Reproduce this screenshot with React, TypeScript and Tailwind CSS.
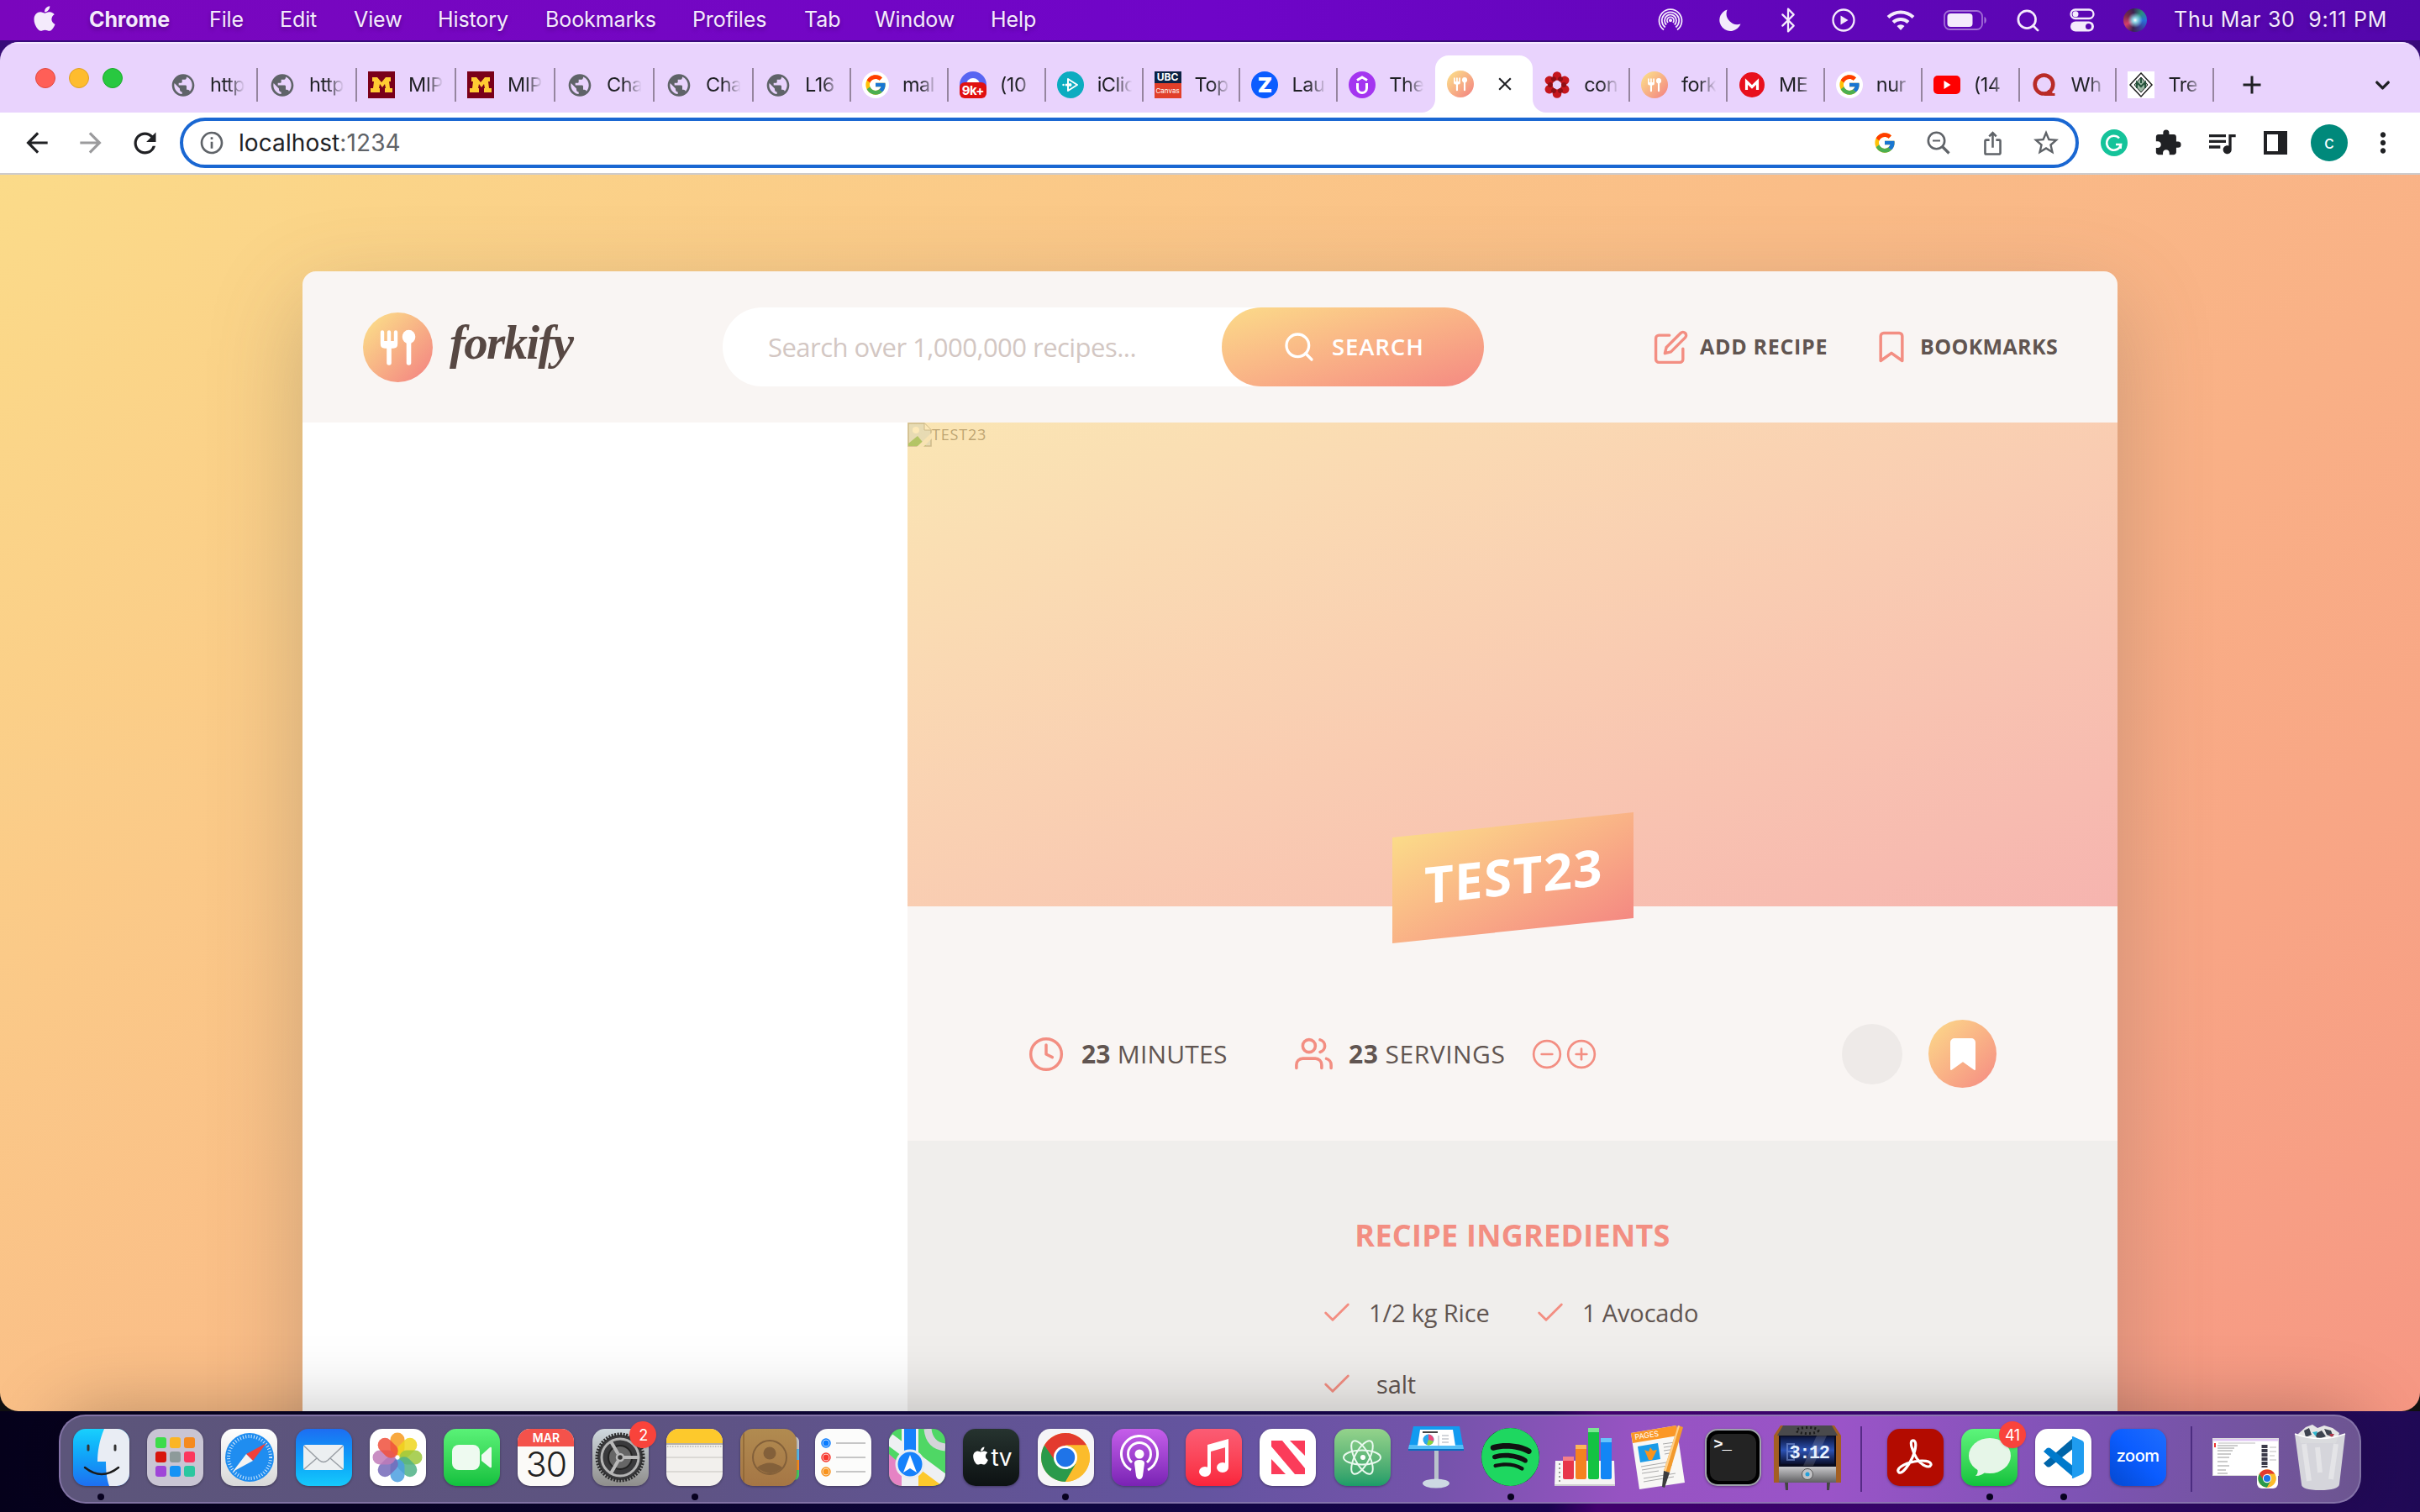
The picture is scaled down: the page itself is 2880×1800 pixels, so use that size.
import React from "react";
import { FaApple, FaSpotify } from "react-icons/fa";
import { FcGoogle } from "react-icons/fc";
import { FiEdit, FiBookmark, FiSearch, FiClock, FiUsers, FiMinusCircle, FiPlusCircle, FiCheck } from "react-icons/fi";
import {
  MdPublic, MdArrowBack, MdArrowForward, MdRefresh, MdInfoOutline, MdIosShare,
  MdStarBorder, MdExtension, MdQueueMusic, MdMoreVert, MdAdd, MdClose,
} from "react-icons/md";
import { Bluetooth, ChevronDown, Search } from "lucide-react";

/* ---------- Menu bar ---------- */

const menus = [
  { label: "Chrome", cls: "w-[143px] font-bold" },
  { label: "File", cls: "w-[84px]" },
  { label: "Edit", cls: "w-[88px]" },
  { label: "View", cls: "w-[100px]" },
  { label: "History", cls: "w-[128px]" },
  { label: "Bookmarks", cls: "w-[175px]" },
  { label: "Profiles", cls: "w-[133px]" },
  { label: "Tab", cls: "w-[84px]" },
  { label: "Window", cls: "w-[138px]" },
  { label: "Help", cls: "w-[80px]" },
];

function Slot({ w, children }: { w: string; children: React.ReactNode }) {
  return <span className={`flex shrink-0 items-center justify-center ${w}`}>{children}</span>;
}

function MenuBar() {
  return (
    <header className="flex h-[48px] shrink-0 items-center bg-linear-to-r from-[#7a06bd] via-[#6f05c8] to-[#5306ab] text-[25px] tracking-[-0.1px] text-[#f4ebfc] [text-shadow:0_3px_5px_rgba(0,0,0,0.25)]">
      <div className="flex w-[106px] justify-center"><FaApple size={34} className="-mt-1" /></div>
      {menus.map((m) => (
        <span key={m.label} className={`shrink-0 whitespace-nowrap ${m.cls}`}>{m.label}</span>
      ))}
      <div className="ml-auto flex items-center">
        <Slot w="w-[72px]">
          <svg width="30" height="30" viewBox="0 0 30 30" fill="none" stroke="currentColor" strokeWidth="1.800">
            <path d="M7 26.500a13.500 13.500 0 1 1 16 0" /><path d="M8.700 23.500a10.200 10.200 0 1 1 12.600 0" /><path d="M10.200 20.500a7 7 0 1 1 9.600 0" /><path d="M12 18a4 4 0 1 1 6 0" />
            <circle cx="15" cy="15.200" r="2" fill="currentColor" stroke="none" />
          </svg>
        </Slot>
        <Slot w="w-[70px]">
          <svg width="28" height="28" viewBox="0 0 28 28" fill="currentColor"><path d="M10.500 1.500A13 13 0 1 0 26.500 18.500 13 13 0 0 1 10.500 1.500z" /></svg>
        </Slot>
        <Slot w="w-[67px]"><Bluetooth size={32} strokeWidth={1.700} /></Slot>
        <Slot w="w-[65px]">
          <svg width="28" height="28" viewBox="0 0 28 28" fill="none" stroke="currentColor" strokeWidth="2.300"><circle cx="14" cy="14" r="12.500" /><path d="M10.500 8.500v11l9-5.500z" fill="currentColor" stroke="none" /></svg>
        </Slot>
        <Slot w="w-[72px]">
          <svg width="34" height="26" viewBox="0 0 34 26" fill="none" stroke="currentColor" strokeWidth="4"><path d="M2 9.500a21.500 21.500 0 0 1 30 0" /><path d="M8 15.500a13 13 0 0 1 18 0" /><path d="M12.500 20a6.500 6.500 0 0 1 9 0L17 25z" fill="currentColor" stroke="none" /></svg>
        </Slot>
        <Slot w="w-[82px]">
          <svg width="52" height="26" viewBox="0 0 52 26" fill="none"><rect x="1" y="2" width="45" height="22" rx="6.500" stroke="currentColor" strokeOpacity=".45" strokeWidth="1.800" /><rect x="4.500" y="5" width="30" height="16" rx="4" fill="currentColor" /><path d="M48.500 9v8c3-1 3-7 0-8z" fill="currentColor" fillOpacity=".5" /></svg>
        </Slot>
        <Slot w="w-[66px]"><Search size={31} strokeWidth={2.100} /></Slot>
        <Slot w="w-[64px]">
          <svg width="30" height="28" viewBox="0 0 30 28" fill="none" stroke="currentColor" strokeWidth="2.300"><rect x="1.500" y="1.500" width="27" height="10.500" rx="5.250" /><circle cx="7" cy="6.750" r="3.500" fill="currentColor" stroke="none" /><rect x="1" y="15.500" width="28" height="12" rx="6" fill="currentColor" stroke="none" /><circle cx="22.500" cy="21.500" r="3.500" fill="#5a06b0" stroke="none" /></svg>
        </Slot>
        <Slot w="w-[61px]">
          <span className="h-7 w-7 rounded-full bg-[radial-gradient(circle_at_50%_50%,#ffffff_0%,#8fd8e8_14%,transparent_45%),conic-gradient(from_40deg,#2a8f7c,#2a6fd8,#3a3f9a,#3c2350,#d33f6b,#7a2a4a,#3c2350,#2a8f7c)]" />
        </Slot>
        <span className="w-[309px] whitespace-pre pl-[16px] tracking-[0.760px]">Thu Mar 30  9:11 PM</span>
      </div>
    </header>
  );
}

/* ---------- Browser chrome ---------- */

function Logo({ size }: { size: number }) {
  return (
    <svg width={size} height={size} viewBox="0 0 83 83">
      <defs>
        <linearGradient id="lg" x1="0" y1="0" x2="1" y2="1"><stop offset=".1" stopColor="#fbdb89" /><stop offset=".9" stopColor="#f48982" /></linearGradient>
      </defs>
      <circle cx="41.500" cy="41.500" r="41.500" fill="url(#lg)" />
      <g fill="none" stroke="#fff" strokeLinecap="round">
        <path d="M23 23.500v14q0 3 3 3h10q3 0 3-3v-14M31 23.500v16" strokeWidth="4.400" />
        <path d="M31 40v20M54.500 36v24" strokeWidth="5.600" />
      </g>
      <path d="M23 34h16v3q0 4-4 4h-8q-4 0-4-4z" fill="#fff" />
      <ellipse cx="54.500" cy="29" rx="7.800" ry="8.200" fill="#fff" />
    </svg>
  );
}

const Globe = () => <MdPublic size={33} color="#5f6368" />;
const Minnesota = () => (
  <span className="flex h-8 w-8 items-center justify-center bg-[#7a0019]">
    <svg width="28" height="18" viewBox="0 0 28 18" fill="#ffcc33"><path d="M3 0h6l5 6 5-6h6v5h-2l1 8h3v5h-9v-5h1l-1-5-3 4-3-4-1 5h1v5H1v-5h3l1-8H3z" /></svg>
  </span>
);
const GoogleIcon = () => (
  <span className="flex h-8 w-8 items-center justify-center rounded-full bg-white"><FcGoogle size={28} /></span>
);
const Discord = () => (
  <span className="relative flex h-8 w-8 justify-center rounded-full bg-[#5865f2]">
    <span className="mt-2 h-4 w-4 rounded-full bg-white" />
    <span className="absolute bottom-0 flex h-[19px] w-8 items-center justify-center rounded-md bg-[#e01010] text-[15px] leading-none font-bold tracking-[-0.500px] text-white">9k+</span>
  </span>
);
const IClicker = () => (
  <svg width="32" height="32" viewBox="0 0 32 32"><circle cx="16" cy="16" r="16" fill="#0cacc0" /><path d="M13 9l11 7-11 7z" fill="none" stroke="#fff" strokeWidth="2" strokeLinejoin="round" /><circle cx="7.500" cy="16" r="1.200" fill="#fff" /><circle cx="11" cy="16" r="1.500" fill="#fff" /><circle cx="15.500" cy="16" r="2" fill="#fff" /></svg>
);
const Ubc = () => (
  <span className="flex h-8 w-8 flex-col text-center leading-none text-white">
    <span className="h-[14px] bg-[#0c2344] pt-px text-[12px] font-bold">UBC</span>
    <span className="h-[18px] bg-[#e13f29] pt-[5px] text-[8px]">Canvas</span>
  </span>
);
const ZBadge = () => <span className="flex h-8 w-8 items-center justify-center rounded-full bg-[#0b5cff] text-[25px] leading-none font-black text-white">Z</span>;
const Udemy = () => (
  <svg width="32" height="32" viewBox="0 0 32 32"><circle cx="16" cy="16" r="16" fill="#a435f0" /><path d="M10.500 14v6a5.500 5.500 0 0 0 11 0v-6M10 10.500l6-3.500 6 3.500" fill="none" stroke="#fff" strokeWidth="3" /></svg>
);
const RedFlower = () => (
  <svg width="32" height="32" viewBox="0 0 32 32" fill="#c5161d">
    {[0, 60, 120, 180, 240, 300].map((a) => <circle key={a} cx="16" cy="5.500" r="5.300" transform={`rotate(${a} 16 16)`} />)}
    {[30, 90, 150, 210, 270, 330].map((a) => <circle key={a} cx="16" cy="8" r="3" fill="#8f1015" transform={`rotate(${a} 16 16)`} />)}
    <circle cx="16" cy="16" r="4" fill="#e9d3fd" />
  </svg>
);
const Mega = () => (
  <svg width="32" height="32" viewBox="0 0 32 32"><circle cx="16" cy="16" r="15" fill="#e8101c" /><path d="M9.500 22V12l6.500 6.500 6.500-6.500v10" fill="none" stroke="#fff" strokeWidth="3.200" /></svg>
);
const YouTube = () => (
  <svg width="32" height="24" viewBox="0 0 32 24"><rect y="1" width="32" height="22" rx="5" fill="#f00" /><path d="M12.500 7v10l8-5z" fill="#fff" /></svg>
);
const Quora = () => (
  <svg width="28" height="28" viewBox="0 0 28 28" fill="none" stroke="#b92b27"><ellipse cx="13.500" cy="13.500" rx="10.800" ry="11" strokeWidth="4.600" /><path d="M14 25.500h12.500M18 21l5 4" strokeWidth="3" /></svg>
);
const Tree = () => (
  <svg width="32" height="32" viewBox="0 0 32 32"><rect width="32" height="32" fill="#fff" /><path d="M16 2L29 16 16 30 3 16z" fill="none" stroke="#222" strokeWidth="1.500" /><path d="M16 7l8 9-8 9-8-9z" fill="#9db8a5" stroke="#222" /><path d="M11 20v-7l5 5 5-5v7M16 8v6" fill="none" stroke="#24523a" strokeWidth="2" /></svg>
);

const tabs: { icon: React.ReactNode; text: string; active?: boolean; wide?: boolean; noLine?: boolean }[] = [
  { icon: <Globe />, text: "http", wide: true },
  { icon: <Globe />, text: "http", wide: true },
  { icon: <Minnesota />, text: "MIP", wide: true },
  { icon: <Minnesota />, text: "MIP", wide: true },
  { icon: <Globe />, text: "Cha", wide: true },
  { icon: <Globe />, text: "Cha", wide: true },
  { icon: <Globe />, text: "L16" },
  { icon: <GoogleIcon />, text: "mal" },
  { icon: <Discord />, text: "(10" },
  { icon: <IClicker />, text: "iClic" },
  { icon: <Ubc />, text: "Top" },
  { icon: <ZBadge />, text: "Lau" },
  { icon: <Udemy />, text: "The", noLine: true },
  { icon: <Logo size={32} />, text: "", active: true },
  { icon: <RedFlower />, text: "con" },
  { icon: <Logo size={32} />, text: "fork" },
  { icon: <Mega />, text: "ME" },
  { icon: <GoogleIcon />, text: "nur" },
  { icon: <YouTube />, text: "(14" },
  { icon: <Quora />, text: "Wh" },
  { icon: <Tree />, text: "Tre" },
];

function TabStrip() {
  return (
    <div className="flex h-[84px] shrink-0 border-t-2 border-[#f4eaff] bg-[#e9d3fd] text-[#1f2024]">
      <div className="flex w-[189px] shrink-0 items-center gap-[16px] pl-[42px]">
        <i className="h-6 w-6 rounded-full border border-[#e0483f] bg-[#ff5f57]" />
        <i className="h-6 w-6 rounded-full border border-[#dfa123] bg-[#febc2e]" />
        <i className="h-6 w-6 rounded-full border border-[#1aab29] bg-[#28c840]" />
      </div>
      {tabs.map((t, i) =>
        t.active ? (
          <div key={i} className="relative mt-[14px] flex w-[115.900px] shrink-0 items-center rounded-t-[16px] bg-white pl-[14px]">
            <svg className="absolute bottom-0 -left-4" width="16" height="16"><path d="M16 0v16H0A16 16 0 0 0 16 0z" fill="#fff" /></svg>
            <svg className="absolute -right-4 bottom-0" width="16" height="16"><path d="M0 0v16h16A16 16 0 0 1 0 0z" fill="#fff" /></svg>
            {t.icon}
            <MdClose size={26} className="ml-[24px]" />
          </div>
        ) : (
          <div key={i} className={`flex shrink-0 items-center pt-[16px] ${t.wide ? "w-[118px]" : "w-[115.900px]"}`}>
            <span className="ml-[13px] flex w-8 shrink-0 items-center justify-center">{t.icon}</span>
            <span className="ml-[16px] w-[46px] whitespace-nowrap text-[23.500px] tracking-[-0.500px] [mask-image:linear-gradient(to_right,#000_45%,transparent_90%)]">{t.text}</span>
            {!t.noLine && <i className="ml-auto h-10 w-[2px] bg-[#96859f]" />}
          </div>
        )
      )}
      <div className="flex w-[90px] items-center justify-center pt-[16px]"><MdAdd size={36} /></div>
      <div className="ml-auto flex w-[90px] items-center justify-center pt-[16px]"><ChevronDown size={27} strokeWidth={3} /></div>
    </div>
  );
}

function Toolbar() {
  return (
    <div className="flex h-[74px] shrink-0 items-center border-b-2 border-[#cdcbcc] bg-white text-[#202124]">
      <div className="flex w-[214px] shrink-0 items-center pl-3">
        <Slot w="w-[64px]"><MdArrowBack size={38} /></Slot>
        <Slot w="w-[64px]"><MdArrowForward size={38} color="#9b9b9d" /></Slot>
        <Slot w="w-[64px]"><MdRefresh size={39} /></Slot>
      </div>
      <div className="flex h-[60px] w-[2260px] shrink-0 items-center rounded-full border-4 border-[#1a67d2] text-[#5f6368]">
        <MdInfoOutline size={32} className="ml-[18px]" />
        <span className="ml-[16px] text-[28px] tracking-[0.080px]"><span className="text-[#202124]">localhost</span>:1234</span>
        <div className="ml-auto mr-[3px] flex">
          <Slot w="w-[64px]"><FcGoogle size={28} /></Slot>
          <Slot w="w-[64px]">
            <svg width="28" height="28" viewBox="0 0 28 28" fill="none" stroke="currentColor"><circle cx="11.500" cy="11.500" r="9.700" strokeWidth="2.600" /><path d="M18.500 18.500l8 8" strokeWidth="3.200" /><path d="M7 11.500h9" strokeWidth="2" /></svg>
          </Slot>
          <Slot w="w-[64px]"><MdIosShare size={31} /></Slot>
          <Slot w="w-[64px]"><MdStarBorder size={36} /></Slot>
        </div>
      </div>
      <div className="ml-[10px] flex items-center">
        <Slot w="w-[64px]">
          <svg width="32" height="32" viewBox="0 0 32 32"><circle cx="16" cy="16" r="16" fill="#15c39a" /><path d="M22 10.500A8.500 8.500 0 1 0 24 18h-6M24 18l-.5 5" fill="none" stroke="#fff" strokeWidth="2.600" /></svg>
        </Slot>
        <Slot w="w-[64px]"><MdExtension size={34} /></Slot>
        <Slot w="w-[64px]"><MdQueueMusic size={40} /></Slot>
        <Slot w="w-[64px]"><i className="h-7 w-7 border-4 border-r-[11px] border-[#202124]" /></Slot>
        <Slot w="w-[64px]"><span className="flex h-[44px] w-[44px] items-center justify-center rounded-full bg-[#00897b] text-[21px] text-white">c</span></Slot>
        <Slot w="w-[64px]"><MdMoreVert size={38} /></Slot>
      </div>
    </div>
  );
}

/* ---------- Forkify page ---------- */

function SiteHeader() {
  return (
    <div className="flex h-[180px] shrink-0 items-center bg-[#f9f5f3] pl-[72px]">
      <div className="flex w-[428px] items-center">
        <Logo size={83} />
        <span className="-mt-3 ml-[20px] font-['Liberation_Serif',serif] text-[57px] leading-none font-bold tracking-[-1.700px] text-[#574843] italic">forkify</span>
      </div>
      <div className="flex h-[94px] w-[906px] shrink-0 items-center rounded-full bg-white pl-[54px]">
        <span className="text-[31px] tracking-[-0.530px] whitespace-nowrap text-[#d3c7c3]">Search over 1,000,000 recipes...</span>
        <div className="ml-auto flex h-[94px] w-[312px] items-center rounded-full bg-linear-to-br from-[#fbdb89] to-[#f48982] pl-[72px] text-white">
          <FiSearch size={40} strokeWidth={2} />
          <span className="ml-[19px] text-[27.500px] font-semibold tracking-[0.900px]">SEARCH</span>
        </div>
      </div>
      <div className="ml-[201px] flex items-center text-[25px] font-bold text-[#615551]">
        <FiEdit size={43} strokeWidth={1.900} className="text-[#f38e82]" />
        <span className="ml-[13px] w-[206px] tracking-[0.700px] whitespace-nowrap">ADD RECIPE</span>
        <FiBookmark size={44} strokeWidth={1.900} className="text-[#f38e82]" />
        <span className="ml-[12px] tracking-[0.350px]">BOOKMARKS</span>
      </div>
    </div>
  );
}

function Hero() {
  return (
    <div className="relative flex h-[576px] shrink-0 justify-center">
      <div className="absolute inset-0 flex items-start bg-[#f9f5f3]">
        <svg width="29" height="29" viewBox="0 0 29 29"><path d="M1 1h19l8 8v19H1z" fill="#c9dcf2" stroke="#8b8b8b" strokeWidth="1.500" /><path d="M20 1v8h8" fill="#fff" stroke="#8b8b8b" /><path d="M1 28v-3L12 16l10 12z" fill="#4aa630" /><circle cx="10" cy="9" r="4" fill="#fff" /><path d="M11 29L29 12v7L19 29z" fill="#f4f1ef" /></svg>
        <span className="text-[18px] leading-[28px] tracking-[0.800px] text-[#615551]">TEST23</span>
      </div>
      <div className="absolute inset-0 bg-linear-to-br from-[#fbdb89] to-[#f48982] opacity-60" />
      <h1 className="absolute top-[479px] flex h-[126px] w-[287px] -skew-y-6 items-center justify-center bg-linear-to-br from-[#fbdb89] to-[#f48982] pb-[6px] pl-[2px] text-[60px] font-bold tracking-[1.400px] text-white">TEST23</h1>
    </div>
  );
}

function Details() {
  return (
    <div className="flex h-[279px] shrink-0 items-center bg-[#f9f5f3] pt-[100px] pr-[144px] pb-[28px] pl-[143px] text-[30px] tracking-[0.200px] text-[#615551]">
      <FiClock size={44} strokeWidth={1.900} className="text-[#f38e82]" />
      <span className="ml-[20px] w-[254px] whitespace-nowrap"><b>23</b> MINUTES</span>
      <FiUsers size={45} strokeWidth={1.900} className="text-[#f38e82]" />
      <span className="ml-[19px] w-[217px] tracking-[0.500px] whitespace-nowrap"><b>23</b> SERVINGS</span>
      <FiMinusCircle size={38} strokeWidth={1.700} className="mr-[3px] text-[#f38e82]" />
      <FiPlusCircle size={38} strokeWidth={1.700} className="text-[#f38e82]" />
      <i className="ml-auto h-[72px] w-[72px] rounded-full bg-[#eeeae8]" />
      <span className="ml-[31px] flex h-[81px] w-[81px] items-center justify-center rounded-full bg-linear-to-br from-[#fbdb89] to-[#f48982]">
        <FiBookmark size={48} strokeWidth={1} fill="white" className="text-white" />
      </span>
    </div>
  );
}

function Ingredient({ text, pad }: { text: string; pad?: boolean }) {
  return (
    <div className="flex h-[44px] items-center">
      <FiCheck size={40} strokeWidth={1.700} className="-ml-[6px] text-[#f38e82]" />
      <span className={pad ? "ml-[27px]" : "ml-[18px]"}>{text}</span>
    </div>
  );
}

function Ingredients() {
  return (
    <div className="flex grow flex-col items-center bg-[#f0eeec] pt-[85px]">
      <h2 className="h-[56px] text-[36px] leading-[56px] font-bold tracking-[0.250px] text-[#f38e82]">RECIPE INGREDIENTS</h2>
      <div className="mt-[42px] grid w-[446px] grid-cols-[254px_192px] gap-y-[41px] text-[29px] tracking-[-0.150px] whitespace-nowrap text-[#615551]">
        <Ingredient text="1/2 kg Rice" />
        <Ingredient text="1 Avocado" />
        <Ingredient text="salt" pad />
      </div>
    </div>
  );
}

function Page() {
  return (
    <main className="flex grow justify-center overflow-hidden bg-linear-to-br from-[#fbdb89] to-[#f48982] bg-[length:100%_2200px] bg-no-repeat pt-[115px] font-['Open_Sans',sans-serif]">
      <div className="flex h-[1500px] w-[2160px] flex-col overflow-hidden rounded-[16px] shadow-[0_36px_108px_rgba(97,85,81,0.3)]">
        <SiteHeader />
        <div className="flex grow">
          <div className="w-[720px] bg-white" />
          <div className="flex w-[1440px] flex-col">
            <Hero />
            <Details />
            <Ingredients />
          </div>
        </div>
      </div>
    </main>
  );
}

/* ---------- Dock ---------- */

function Chrome({ size }: { size: number }) {
  return (
    <svg width={size} height={size} viewBox="-30 -30 60 60">
      <circle r="29" fill="#fbbc2c" />
      <path d="M-25.100-14.500A29 29 0 0 1 25.100-14.500H0L-12 7z" fill="#e33b2e" />
      <path d="M-25.100-14.500A29 29 0 0 0 0 29L12.500 7.500H-10z" fill="#2a9a4b" />
      <path d="M0-14.500h25.100A29 29 0 0 1 0 29L12.800 7z" fill="#fbbc2c" />
      <circle r="14" fill="#fff" /><circle r="11.200" fill="#1f74e8" />
    </svg>
  );
}

function Tile({ bg, children }: { bg: string; children?: React.ReactNode }) {
  return <span className={`relative flex h-[68px] w-[67px] items-center justify-center overflow-hidden rounded-[15px] shadow-[0_1px_3px_rgba(0,0,0,0.35)] ${bg}`}>{children}</span>;
}

const Finder = () => (
  <Tile bg="bg-linear-to-b from-[#19d0fd] to-[#1e6ff0]">
    <svg width="67" height="68" viewBox="0 0 67 68"><path d="M37 0C31 14 29 28 29 39h10c0 12 1 20 4 29h24V0z" fill="#e9edf4" /><path d="M18 20v5M50 20v5" stroke="#333" strokeWidth="3" strokeLinecap="round" /><path d="M14 46q20 16 40 0" fill="none" stroke="#1b1b1b" strokeWidth="2.500" strokeLinecap="round" /></svg>
  </Tile>
);
const Launchpad = () => (
  <Tile bg="bg-[#c9c5d4]">
    <span className="grid grid-cols-3 gap-[4px]">
      {["bg-[#3ddc4b]", "bg-[#fbb524]", "bg-[#f58a1f]", "bg-[#d8140c]", "bg-[#8d9a9a]", "bg-[#fc375e]", "bg-[#9f45d8]", "bg-[#1493f5]", "bg-[#2bc7a0]"].map((c) => <i key={c} className={`h-[13px] w-[13px] rounded-[3px] ${c}`} />)}
    </span>
  </Tile>
);
const Safari = () => (
  <Tile bg="bg-linear-to-b from-white to-[#d8d8d8]">
    <svg width="60" height="60" viewBox="-30 -30 60 60"><circle r="29" fill="#1f8df0" /><circle r="25" fill="none" stroke="#fff" strokeOpacity=".8" strokeWidth="4" strokeDasharray="1 2.300" /><path d="M20-17L4 4l-8-8z" fill="#f0403a" /><path d="M-20 17L4 4l-8-8z" fill="#f3f3f3" /></svg>
  </Tile>
);
const Mail = () => (
  <Tile bg="bg-linear-to-b from-[#1d6df2] to-[#17c9fb]">
    <svg width="48" height="30" viewBox="0 0 48 30"><rect width="48" height="30" rx="3" fill="#eceff1" /><path d="M1 1.500l18 17q5 4 10 0l18-17M1 29l15-13M47 29L32 16" fill="none" stroke="#9a9fa5" strokeWidth="1.500" /></svg>
  </Tile>
);
const Photos = () => (
  <Tile bg="bg-white">
    <svg width="62" height="62" viewBox="-31 -31 62 62">
      {["#f79a1e", "#efd61d", "#9cc83c", "#4fb286", "#4b9fe0", "#7469b8", "#c07ab8", "#f0503c"].map((c, i) => <rect key={c} x="-8.500" y="-29.500" width="17" height="27" rx="8.500" fill={c} fillOpacity=".85" transform={`rotate(${i * 45})`} />)}
    </svg>
  </Tile>
);
const FaceTime = () => (
  <Tile bg="bg-linear-to-b from-[#59f277] to-[#0fc13e]">
    <svg width="48" height="32" viewBox="0 0 48 32" fill="#eefaf0"><rect y="1" width="33" height="30" rx="8" /><path d="M35 13l10-9q2-1 2 1v22q0 2-2 1l-10-8z" /></svg>
  </Tile>
);
const Calendar = () => (
  <Tile bg="bg-[#fbfaf8]">
    <span className="flex h-full w-full flex-col items-center text-center">
      <span className="h-[21px] w-full bg-[#f4524b] text-[14px] leading-[22px] font-semibold text-white">MAR</span>
      <span className="text-[41px] leading-[43px] font-light tracking-[-1px] text-[#222]">30</span>
    </span>
  </Tile>
);
const Settings = () => (
  <Tile bg="bg-linear-to-b from-[#cfd8de] to-[#8f8e8c]">
    <svg width="62" height="62" viewBox="-31 -31 62 62" fill="none"><circle r="27" fill="#3a3a3c" /><circle r="27.500" stroke="#2b2b2c" strokeWidth="4" strokeDasharray="2 1.500" /><circle r="22" stroke="#b4b4b4" strokeWidth="3" /><circle r="14" fill="#666" stroke="#222" strokeWidth="2" /><circle r="4" fill="#333" stroke="#b9b9b9" strokeWidth="2.500" />
      <path d="M5 0h17M-2.500-4.300L-11-19M-2.500 4.300L-11 19" stroke="#b9b9b9" strokeWidth="4" /></svg>
  </Tile>
);
const Notes = () => (
  <Tile bg="bg-[#f2f0ed]">
    <svg width="67" height="68"><rect width="67" height="17" fill="#fdc92c" /><path d="M0 18h67" stroke="#9d9a94" strokeWidth="1.500" /><path d="M1 21h66" stroke="#b7b4ae" strokeWidth="1.500" strokeDasharray="1.500 1.500" /><path d="M0 34h67M0 51h67" stroke="#d4d1cd" strokeWidth="1.500" /></svg>
  </Tile>
);
const Contacts = () => (
  <span className="relative flex">
    <span className="absolute top-[9px] -right-[3px] flex h-[52px] w-3 flex-col overflow-hidden rounded-md">
      <i className="h-[15px] bg-[#c9c9cc]" /><i className="h-[13px] bg-[#58b9ea]" /><i className="h-[12px] bg-[#f58e1f]" /><i className="h-[12px] bg-[#46cf5f]" />
    </span>
    <Tile bg="bg-linear-to-b from-[#b18b50] to-[#a57645]">
      <svg width="67" height="68" fill="none"><path d="M4 0v68" stroke="#8c6535" strokeWidth="1.500" /><circle cx="35" cy="34" r="20" stroke="#83603a" strokeWidth="2" /><circle cx="35" cy="29" r="7.500" fill="#83603a" /><path d="M20 46q15-11 30 0-13 14-30 0z" fill="#83603a" /></svg>
    </Tile>
  </span>
);
const Reminders = () => (
  <Tile bg="bg-[#fcfcfb]">
    <svg width="67" height="68" fill="none">{["#0a7cff", "#f7382e", "#f8931d"].map((c, i) => <g key={c}><circle cx="13" cy={17 + i * 17} r="5" stroke={c} strokeWidth="1.500" /><circle cx="13" cy={17 + i * 17} r="3.500" fill={c} /><path d={`M25 ${17 + i * 17}h35`} stroke="#b5b5b5" strokeWidth="1.500" /></g>)}</svg>
  </Tile>
);
const Maps = () => (
  <Tile bg="bg-[#4fd765]">
    <svg width="67" height="68"><path d="M0 30l16 14v24H0z" fill="#e583c4" /><path d="M30 34l37 34H30z" fill="#fdc92c" /><path d="M0 12l67 50" stroke="#eef0f3" strokeWidth="14" /><path d="M25 0v68" stroke="#eef0f3" strokeWidth="20" /><path d="M25 0v46" stroke="#1681fb" strokeWidth="14" /><path d="M46 0q2 20 21 22" fill="none" stroke="#d4d4da" strokeWidth="9" /><circle cx="25" cy="42" r="16" fill="#1681fb" stroke="#e9ecf2" strokeWidth="3" /><path d="M25 31l8 21-8-5-8 5z" fill="#fff" /></svg>
  </Tile>
);
const AppleTv = () => (
  <Tile bg="bg-linear-to-b from-[#26332f] to-[#0d1213]"><FaApple size={24} color="white" className="-mt-1" /><span className="text-[28px] leading-none tracking-[-0.500px] text-white">tv</span></Tile>
);
const Podcasts = () => (
  <Tile bg="bg-linear-to-b from-[#c65eea] to-[#7a22b4]">
    <svg width="54" height="54" viewBox="0 0 54 54" fill="none" stroke="#fff" strokeWidth="3"><path d="M17 42a21.500 21.500 0 1 1 20 0" /><path d="M18 33a13.500 13.500 0 1 1 18 0" /><circle cx="27" cy="23" r="5.500" fill="#fff" stroke="none" /><path d="M21 34q0-4 6-4t6 4l-2 15q-1 4-4 4t-4-4z" fill="#fff" stroke="none" /></svg>
  </Tile>
);
const Music = () => (
  <Tile bg="bg-linear-to-b from-[#fb5c74] to-[#fa233b]">
    <svg width="38" height="48" viewBox="0 0 38 48" fill="#fff"><path d="M11 9l25-7v9L15 17v24h-4z" /><path d="M32 5h4v30h-4z" /><ellipse cx="8" cy="41" rx="7" ry="6" /><ellipse cx="29" cy="36" rx="7" ry="6" /></svg>
  </Tile>
);
const News = () => (
  <Tile bg="bg-white">
    <svg width="40" height="40" fill="#fb3c5a"><path d="M0 0h13l27 33v7H28L0 7z" /><path d="M22 0h18v18z" /><path d="M0 22v18h17z" /></svg>
  </Tile>
);
const Atom = () => (
  <Tile bg="bg-linear-to-b from-[#94d38b] to-[#1a9d68]">
    <svg width="50" height="50" viewBox="-25 -25 50 50" fill="none" stroke="#e9f9ee" strokeWidth="2"><ellipse rx="22" ry="8.500" /><ellipse rx="22" ry="8.500" transform="rotate(62)" /><ellipse rx="22" ry="8.500" transform="rotate(118)" /><circle cx="1" r="3" fill="#fff" stroke="none" /></svg>
  </Tile>
);
const Keynote = () => (
  <svg width="68" height="78" viewBox="0 0 68 78"><path d="M32 30h5v40h-5z" fill="#b9c2cb" /><ellipse cx="34" cy="70" rx="16" ry="5.500" fill="#cdd9e3" /><path d="M7 2h55l5 28H1z" fill="#129bf0" /><path d="M1 28h66v3H1z" fill="#0a6fc0" /><path d="M2 24h64l1 5H1z" fill="#54bdf6" /><path d="M15 6h39l3 19H12z" fill="#fff" /><path d="M18 9h18" stroke="#444" strokeWidth="2" /><circle cx="25" cy="18" r="6.500" fill="#2aa7ee" /><path d="M25 18V11.500a6.500 6.500 0 0 1 6 8z" fill="#ee4b7b" /><path d="M25 18l6 2a6 6 0 0 1-8 4z" fill="#8bd23a" /><path d="M37 13v12M41 13h8M41 17h8M41 21h8" stroke="#c4c8ce" strokeWidth="1.500" /></svg>
);
const Spotify = () => (
  <span className="flex h-[69px] w-[69px] items-center justify-center rounded-full bg-[#111]"><FaSpotify size={71} color="#1ed760" className="shrink-0" /></span>
);
const Numbers = () => (
  <svg width="74" height="72" viewBox="0 0 74 72"><path d="M2 40h70l1 30H1z" fill="#f6f5f4" /><path d="M1 68h72v2H1z" fill="#cfcfcf" /><path d="M7 43v22" stroke="#999" strokeWidth="2" strokeDasharray="2 3" /><g><rect x="11" y="35" width="13" height="27" rx="2" fill="#e8374a" /><rect x="11" y="35" width="13" height="5" fill="#f77f88" /><rect x="26" y="21" width="13" height="41" rx="2" fill="#f58220" /><rect x="26" y="21" width="13" height="5" fill="#fbb65a" /><rect x="41" y="1" width="13" height="61" rx="2" fill="#14c343" /><rect x="41" y="1" width="13" height="5" fill="#7ae890" /><rect x="56" y="13" width="13" height="49" rx="2" fill="#1286f5" /><rect x="56" y="13" width="13" height="5" fill="#66c4fb" /></g></svg>
);
const Pages = () => (
  <svg width="70" height="78" viewBox="0 0 70 78"><path d="M2 10l54-9 10 68-54 8z" fill="#f8f7f5" /><path d="M2 10l54-9 2 12L4 22z" fill="#fb9726" /><text x="7" y="18" fontSize="9" fill="#fff" transform="rotate(-9 7 18)">PAGES</text><path d="M10 26l24-4 3 19-24 4z" fill="#1a9be8" /><path d="M23 42l-5-12 5 2 2-5 3 4 5-1-6 12z" fill="#f8931d" /><path d="M40 23l14-2M41 27l14-2M41 31l14-2M42 35l12-2M14 50l36-6M15 54l36-6M15 58l20-3M17 64l38-6M17 68l36-6" stroke="#aaa" strokeWidth="1" /><path d="M58 1l6 2-16 54-7-2z" fill="#f39a2c" /><path d="M58 1l2 .6L43.500 56l-2.500-1z" fill="#ffd08a" /><path d="M41 55l7 2-6 18-3-1z" fill="#3c3c3e" /></svg>
);
const Terminal = () => (
  <Tile bg="border-2 border-[#9fa3ab] bg-black">
    <span className="flex h-[56px] w-[55px] rounded-[10px] bg-[#232323] pt-1 pl-1 font-['Liberation_Mono',monospace] text-[19px] leading-none font-bold tracking-[-1px] text-white">&gt;_</span>
  </Tile>
);
const RadioClock = () => (
  <svg width="82" height="78" viewBox="0 0 82 78">
    <defs>
      <linearGradient id="lcd" x1="0" y1="0" x2="0" y2="1"><stop offset="0" stopColor="#0b1338" /><stop offset=".5" stopColor="#2c52b4" /><stop offset="1" stopColor="#0a0f2c" /></linearGradient>
      <linearGradient id="steel" x1="0" y1="0" x2="0" y2="1"><stop offset="0" stopColor="#c9c9cb" /><stop offset="1" stopColor="#5f5f62" /></linearGradient>
    </defs>
    <path d="M14 68h4v10h-3zM64 68h4l-1 10h-3z" fill="#444" /><path d="M9 1h64l8 12v56H1V13z" fill="#a35f22" /><path d="M12 1h58l7 12H5z" fill="#4a4a4c" /><ellipse cx="41" cy="7" rx="13" ry="3.500" fill="none" stroke="#1d1d1d" strokeWidth="3" strokeDasharray="2 3" /><path d="M7 13h68v37H7z" fill="#080b1e" /><path d="M9 14h64v33H9z" fill="url(#lcd)" /><path d="M52 13h12L48 49H36z" fill="#fff" fillOpacity=".15" /><path d="M17 23h8v19h-8zM17 32h8" fill="none" stroke="#7c96d8" strokeWidth="2" strokeOpacity=".6" /><text x="43" y="40" textAnchor="middle" fontSize="22" fontFamily="Liberation Mono" fontWeight="bold" letterSpacing="-1.500" fill="#e8f2ff">3:12</text><path d="M7 50h68v19H7z" fill="url(#steel)" /><circle cx="41" cy="59" r="6.500" fill="#c2c2c4" stroke="#555" /><circle cx="41" cy="59" r="2.500" fill="#23a0da" />
  </svg>
);
const Acrobat = () => (
  <Tile bg="bg-[#b30b00]">
    <svg width="46" height="46" viewBox="0 0 46 46" fill="none" stroke="#fff" strokeWidth="3.200"><path d="M20 3c6-1 4 11 0 20-4 9-12 20-16 18-5-4 6-11 18-13 10-2 21-1 20 4-2 5-12 0-17-8C20 16 16 4 20 3z" /></svg>
  </Tile>
);
const Messages = () => (
  <Tile bg="bg-linear-to-b from-[#5cf57b] to-[#0ec23c]">
    <svg width="54" height="50" viewBox="0 0 54 50" fill="#e6f6e8"><ellipse cx="27" cy="23" rx="25" ry="21" /><path d="M12 37q2 7-2 10 8 0 13-6z" /></svg>
  </Tile>
);
const VsCode = () => (
  <Tile bg="bg-white">
    <svg width="50" height="50" viewBox="0 0 50 50"><path d="M1 32l4 4q2 1 4 0L37 14V1z" fill="#0065a9" /><path d="M1 18l4-4q2-1 4 0l28 22v13z" fill="#007acc" /><path d="M36 0l11 5q2 1 2 3v34q0 2-2 3l-11 5q-2 0-1-1V1q-1-1 1-1z" fill="#1f9cf0" /></svg>
  </Tile>
);
const Zoom = () => <Tile bg="bg-linear-to-bl from-[#1f6dfd] via-[#0a5cff] to-[#0549d0]"><span className="pb-1 text-[20px] font-medium tracking-[-0.500px] text-white">zoom</span></Tile>;
const Thumb = () => (
  <span className="relative flex h-[45px] w-[79px] border border-[#ddd] bg-white">
    <svg width="79" height="45"><path d="M0 1h79" stroke="#e0c6f4" strokeWidth="3" /><path d="M6 5h44" stroke="#bbb" /><path d="M2 5v5" stroke="#e33" strokeWidth="2" /><path d="M5 8h24M5 11h20M5 14h18M5 18h16M5 22h14M5 27h12M5 32h14M5 37h10M5 41h12" stroke="#999" strokeWidth="1" /><path d="M61 7v28" stroke="#3b3b4a" strokeWidth="7" strokeDasharray="4 1" /><path d="M67 10h8M67 15h8M67 20h6M67 25h8" stroke="#bbb" /></svg>
    <span className="absolute right-0 -bottom-[16px] flex h-[25px] w-[25px] items-center justify-center rounded-md bg-white"><Chrome size={22} /></span>
  </span>
);
const Trash = () => (
  <svg width="62" height="80" viewBox="0 0 62 80"><path d="M5 12L14 4l8-3 6 4 8-3 10 3 8 6-4 12H8z" fill="#e6e6e6" /><path d="M12 8l6-3 3 8-7 3zM36 6l8 2 3 8-8-3zM25 12l8-4 5 7-10 4z" fill="#3e4450" /><path d="M22 10l6-1-2 6z" fill="#2fb8d0" /><path d="M42 12l6 0-3 5z" fill="#b0384a" /><path d="M1 12q30 11 60 0l-7 60q-1 7-23 7T9 72z" fill="#d9dadd" fillOpacity=".97" /><path d="M12 24l6 44M50 24l-6 42M28 28l3 30" stroke="#e9e9ec" strokeWidth="6" strokeOpacity=".7" /><path d="M1 12q30 11 60 0" fill="none" stroke="#fff" strokeWidth="1.500" /></svg>
);

function DockCell({ children, dot, badge }: { children: React.ReactNode; dot?: boolean; badge?: string }) {
  return (
    <span className="relative flex h-[100px] w-[88.300px] shrink-0 items-center justify-center pb-[5px]">
      {children}
      {dot && <i className="absolute bottom-[1px] h-2 w-2 rounded-full bg-[#080220]" />}
      {badge && <b className="absolute top-[5px] right-[1px] flex h-8 w-8 items-center justify-center rounded-full bg-[#f9433b] text-[18px] font-normal tracking-[-0.500px] text-white shadow-sm">{badge}</b>}
    </span>
  );
}

const apps: { el: React.ReactNode; dot?: boolean; badge?: string }[] = [
  { el: <Finder />, dot: true }, { el: <Launchpad /> }, { el: <Safari /> }, { el: <Mail /> }, { el: <Photos /> },
  { el: <FaceTime /> }, { el: <Calendar /> }, { el: <Settings />, badge: "2" }, { el: <Notes />, dot: true },
  { el: <Contacts /> }, { el: <Reminders /> }, { el: <Maps /> }, { el: <AppleTv /> },
  { el: <Tile bg="bg-[#f5f5f7]"><Chrome size={60} /></Tile>, dot: true },
  { el: <Podcasts /> }, { el: <Music /> }, { el: <News /> }, { el: <Atom /> }, { el: <Keynote /> },
  { el: <Spotify />, dot: true }, { el: <Numbers /> }, { el: <Pages /> }, { el: <Terminal /> }, { el: <RadioClock /> },
];

function Dock() {
  return (
    <div className="relative mt-1 ml-[70px] flex h-[106px] w-[2740px] shrink-0 items-center rounded-[32px] border-2 border-[#8b7aae]/80 bg-[linear-gradient(100deg,#5c557a_0%,#5d5381_25%,#6454a0_50%,#7553ab_60%,#9653c2_68%,#9a54c8_77%,#7d53b4_88%,#6c5590_100%)] pl-1 shadow-[0_0_90px_rgba(0,0,0,0.27)]">
      {apps.map((a, i) => <DockCell key={i} dot={a.dot} badge={a.badge}>{a.el}</DockCell>)}
      <span className="flex w-[40px] shrink-0 justify-center"><i className="h-[78px] w-[2px] bg-[#562b86]" /></span>
      <DockCell><Acrobat /></DockCell>
      <DockCell dot badge="41"><Messages /></DockCell>
      <DockCell dot><VsCode /></DockCell>
      <DockCell><Zoom /></DockCell>
      <span className="flex w-[40px] shrink-0 justify-center"><i className="h-[78px] w-[2px] bg-[#4c2d80]" /></span>
      <DockCell><Thumb /></DockCell>
      <DockCell><Trash /></DockCell>
    </div>
  );
}

export default function App() {
  return (
    <div className="flex h-[1800px] w-[2880px] flex-col overflow-hidden bg-[linear-gradient(to_right,#06021c_0%,#0b0430_25%,#12074a_45%,#1c0458_64%,#4b007c_66%,#3c0678_80%,#200a56_100%)] font-['Inter',sans-serif]">
      <MenuBar />
      <div className="flex h-[1632px] shrink-0 flex-col bg-[linear-gradient(to_bottom,#3a0a7c_0%,#2c1560_4%,#111_20%)] pt-[2px]">
        <div className="flex h-[1630px] flex-col overflow-hidden rounded-[22px]">
          <TabStrip />
          <Toolbar />
          <Page />
        </div>
      </div>
      <Dock />
    </div>
  );
}
